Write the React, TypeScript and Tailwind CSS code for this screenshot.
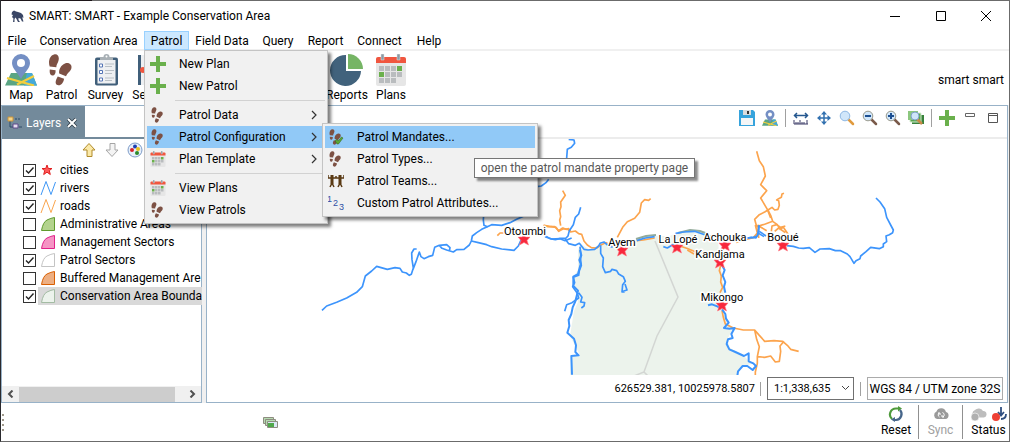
import type { ReactNode } from "react";

const menus = [
  { label: "File", width: "w-8" },
  { label: "Conservation Area", width: "w-[111px]" },
  { label: "Patrol", width: "w-[45px]" },
  { label: "Field Data", width: "w-[66px]" },
  { label: "Query", width: "w-[46px]" },
  { label: "Report", width: "w-[49px]" },
  { label: "Connect", width: "w-[59px]" },
  { label: "Help", width: "w-10" },
];

const layers = [
  { id: "cities", label: "cities", checked: true },
  { id: "rivers", label: "rivers", checked: true },
  { id: "roads", label: "roads", checked: true },
  { id: "admin", label: "Administrative Areas", checked: false, fill: "#b3d38d", stroke: "#5f9a2c" },
  { id: "mgmt", label: "Management Sectors", checked: false, fill: "#f594c4", stroke: "#e0218a" },
  { id: "patrol", label: "Patrol Sectors", checked: true, fill: "#ffffff", stroke: "#c4c4c4" },
  { id: "buffered", label: "Buffered Management Are", checked: false, fill: "#edaf83", stroke: "#d95f02" },
  { id: "boundary", label: "Conservation Area Bounda", checked: true, fill: "#ecf3ec", stroke: "#a3bba3" },
];

const cities = [
  { name: "Otoumbi", x: 524, y: 239, tx: 525, ty: 235 },
  { name: "Ayem", x: 622, y: 250, tx: 622, ty: 246 },
  { name: "La Lopé", x: 677, y: 247, tx: 678, ty: 243 },
  { name: "Achouka", x: 725, y: 245, tx: 725, ty: 241 },
  { name: "Booué", x: 783, y: 245, tx: 783, ty: 241 },
  { name: "Kandjama", x: 720, y: 262, tx: 720, ty: 258 },
  { name: "Mikongo", x: 722, y: 305, tx: 722, ty: 301 },
];

function Plus({ size = 16 }: { size?: number }) {
  return (
    <svg width={size} height={size} viewBox="0 0 16 16">
      <path d="M6 0h4v6h6v4h-6v6H6v-6H0V6h6z" fill="#6ab04c" />
    </svg>
  );
}

function Footprints({ size = 32, check = false }: { size?: number; check?: boolean }) {
  return (
    <svg width={size} height={size} viewBox="0 0 32 32">
      <g fill="#7d5144">
        <path d="M8 .5c3.500-1 5.500 2 4.600 5.700-.6 3-2.200 4-2.300 7L3.700 12.500C2 8 3.500 1.500 8 .5z" />
        <path d="M3.800 15.500l5.800.7c.2 3.300-1 5.500-3.200 5.300-2.400-.2-3-3-2.600-6z" />
        <path d="M19 9.500c4-1.500 7.700 1.500 6.200 5.500-1.200 3-4.200 4.200-5.200 7.300l-6.800-2.700c-.6-4 1.700-8.500 5.800-10.100z" />
        <path d="M11.800 22.500l6.300 2.300c-.8 4.500-3.500 7.300-6.500 6.300-3.200-1.100-2-5.200.2-8.600z" />
      </g>
      {check && <path d="M14 23l4-2 2 3 7-8 3 2-9 12h-3z" fill="#5aa836" stroke="#2e5f1b" />}
    </svg>
  );
}

function Calendar({ size = 32 }: { size?: number }) {
  return (
    <svg width={size} height={size} viewBox="0 0 32 32">
      <path d="M1 4h30v26a2 2 0 0 1-2 2H3a2 2 0 0 1-2-2z" fill="#e6e6e6" />
      <path d="M1 9V5q0-2 2-2h26q2 0 2 2v4z" fill="#f0563f" />
      <path d="M6 0h3v6H6zM22 0h3v6h-3z" fill="#8c9ba5" stroke="#e6e6e6" strokeWidth=".5" />
      <path
        d="M4 12h5v5H4zM10 12h5v5h-5zM16 12h5v5h-5zM10 18h5v5h-5zM16 18h5v5h-5zM22 18h5v5h-5zM4 24h5v5H4zM10 24h5v5h-5zM16 24h5v5h-5z"
        fill="#b9bcbe"
      />
      <path d="M22 12h5v5h-5zM4 18h5v5H4z" fill="#6ab04c" />
    </svg>
  );
}

function MapPin({ size = 32 }: { size?: number }) {
  return (
    <svg width={size} height={size} viewBox="0 0 32 32">
      <path d="M6 19h21l5 12.500H0z" fill="#5aa583" />
      <path d="M22 19h5l5 12.500H19z" fill="#46a9d8" />
      <path d="M2 24l27 7.500M12 30.500L29 22" stroke="#f5cf3d" strokeWidth="2.200" fill="none" />
      <path d="M16 25C12 18 7 14 7 9a9 9 0 0 1 18 0c0 5-5 9-9 16z" fill="#748fc4" />
      <circle cx="16" cy="9" r="4" fill="#fff" />
    </svg>
  );
}

function Clipboard() {
  return (
    <svg width="32" height="32" viewBox="0 0 32 32">
      <rect x="5" y="3.500" width="23" height="28" rx="2" fill="#405f7a" />
      <rect x="7.500" y="6" width="18" height="23.500" fill="#eef0f2" />
      <path d="M10 6V3h3.500a3 3 0 0 1 6 0H23v3z" fill="#a8b0b5" />
      <circle cx="16.500" cy="2.500" r="1" fill="#fff" />
      <path d="M9.500 10h3v3h-3zM9.500 16.500h3v3h-3zM9.500 24h3v3h-3z" fill="#fff" stroke="#5575b5" />
      <path d="M15 10h9M15 12.500h7M15 16.500h9M15 19.500h7M15 24h9M15 26.500h7" stroke="#b9c0c6" />
    </svg>
  );
}

function Notebook() {
  return (
    <svg width="32" height="32" viewBox="0 0 32 32">
      <path d="M0 1h28v30H0z" fill="#405f7a" />
      <path d="M3 1h25v30H3z" fill="#eef0f2" />
      <circle cx="5" cy="16" r="3" fill="#f0563f" />
    </svg>
  );
}

function Pie() {
  return (
    <svg width="34" height="32" viewBox="0 0 34 32">
      <path d="M16 1v16h15A15.500 15.500 0 1 1 16 1z" fill="#41627c" />
      <path d="M18 0a15 15 0 0 1 15 15H18z" fill="#76b565" />
    </svg>
  );
}

function Lens({ sign }: { sign?: "plus" | "minus" }) {
  return (
    <svg width="16" height="16" viewBox="0 0 16 16">
      <path d="M9 9l5 5" stroke={sign ? "#7a5a4a" : "#e09a3e"} strokeWidth="2.500" strokeLinecap="round" />
      <circle cx="6" cy="6" r="4.800" fill="#d0e6fa" stroke={sign ? "#9a9a8c" : "#8fb8e4"} />
      {sign && <path d="M3 6h6" stroke="#1d4f91" strokeWidth="2" />}
      {sign === "plus" && <path d="M6 3v6" stroke="#1d4f91" strokeWidth="2" />}
    </svg>
  );
}

function LayerIcon({ id, fill, stroke }: { id: string; fill?: string; stroke?: string }) {
  return (
    <svg width="16" height="16" viewBox="0 0 16 16" className="shrink-0">
      {id === "cities" && (
        <path d="M7 3l1.300 3.500H12L9.300 8.600 10.300 12.500 7 10.200 3.700 12.500l1-3.900L2 6.500h3.700z" fill="#ff5a5a" stroke="#e02020" />
      )}
      {(id === "rivers" || id === "roads") && (
        <path d="M1 15L6 1.500l5 13L15.500 2" fill="none" stroke={id === "rivers" ? "#3d96f5" : "#f9a54e"} />
      )}
      {fill && <path d="M1.500 14.500Q3 6 7 4t7.500-2.500v13z" fill={fill} stroke={stroke} />}
    </svg>
  );
}

function MenuRow({ icon, label, active, arrow, children }: {
  icon: ReactNode;
  label: string;
  active?: boolean;
  arrow?: boolean;
  children?: ReactNode;
}) {
  return (
    <li className="relative">
      <button
        className={
          active
            ? "flex h-[22px] w-full items-center bg-[#91c9f7] pl-[3px] pr-2 text-left"
            : "flex h-[22px] w-full items-center pl-[3px] pr-2 text-left"
        }
      >
        <span className="w-[29px] shrink-0">{icon}</span>
        <span className="flex-1">{label}</span>
        {arrow && (
          <svg width="6" height="10" viewBox="0 0 6 10">
            <path d="M1 1l4 4-4 4" fill="none" stroke="#333" strokeWidth="1.200" />
          </svg>
        )}
      </button>
      {children}
    </li>
  );
}

function MenuLine() {
  return (
    <li className="flex h-[7px] items-center pl-[28px]">
      <div className="h-px w-full bg-[#d2d2d2]" />
    </li>
  );
}

function PatrolMenu() {
  return (
    <div className="absolute left-0 top-[19px] z-20 w-[184px] border border-[#c4c4c4] bg-[#f1f1f1] p-[2px] shadow-[3px_3px_3px_rgba(0,0,0,0.5)]">
      <ul>
        <MenuRow icon={<Plus />} label="New Plan" />
        <MenuRow icon={<Plus />} label="New Patrol" />
        <MenuLine />
        <MenuRow icon={<Footprints size={16} />} label="Patrol Data" arrow />
        <MenuRow icon={<Footprints size={16} />} label="Patrol Configuration" active arrow>
          <ul className="absolute -top-[3px] left-[175px] w-[216px] border border-[#c4c4c4] bg-[#f1f1f1] p-[2px] shadow-[3px_3px_3px_rgba(0,0,0,0.5)]">
            <MenuRow icon={<Footprints size={16} check />} label="Patrol Mandates..." active />
            <MenuRow icon={<Footprints size={16} />} label="Patrol Types..." />
            <MenuRow
              icon={
                <svg width="16" height="16" viewBox="0 0 16 16" fill="none" stroke="#5a3a14" strokeWidth="1.500">
                  <path d="M0 5h16M0 2v3M8 3v2M16 2v3M4 5v5l-2 4M4 10l2 4M12 5v5l-2 4M12 10l2 4" />
                  <path d="M4 2v9M12 2v9" strokeWidth="3" />
                </svg>
              }
              label="Patrol Teams..."
            />
            <MenuRow
              icon={
                <svg width="16" height="16" viewBox="0 0 16 16" fill="#2f4fa5" fontSize="9" fontFamily="Liberation Sans, sans-serif">
                  <text x="-1" y="7">1</text>
                  <text x="5" y="11">2</text>
                  <text x="11" y="15">3</text>
                </svg>
              }
              label="Custom Patrol Attributes..."
            />
          </ul>
        </MenuRow>
        <MenuRow icon={<Calendar size={16} />} label="Plan Template" arrow />
        <MenuLine />
        <MenuRow icon={<Calendar size={16} />} label="View Plans" />
        <MenuRow icon={<Footprints size={16} />} label="View Patrols" />
      </ul>
      <div
        role="tooltip"
        className="absolute left-[329px] top-[107px] flex h-5 w-[221px] items-center justify-center whitespace-nowrap border border-[#767676] bg-white text-[#575757] shadow-[3px_3px_2px_rgba(0,0,0,0.45)]"
      >
        open the patrol mandate property page
      </div>
    </div>
  );
}

function Tool({ icon, label, width }: { icon: ReactNode; label: string; width: string }) {
  return (
    <button className={`flex flex-col items-center gap-px ${width}`}>
      {icon}
      <span className="h-4 leading-4">{label}</span>
    </button>
  );
}

function LayerPanel() {
  return (
    <section className="flex w-[201px] shrink-0 flex-col border border-[#98b2c8] bg-white">
      <div className="flex h-[33px] items-start border-b-2 border-[#738a9b]">
        <div className="flex h-[33px] w-[83px] items-center bg-[#738a9b] pl-[5px] text-white">
          <svg width="16" height="16" viewBox="0 0 16 16" className="mr-[3px] shrink-0">
            <path d="M3 6v6h4M8 4h2M11 4h2M12 12h3" stroke="#2c4a66" fill="none" />
            <path d="M1 2h5v4H1z" fill="#f5d48a" stroke="#c8933a" />
            <path d="M6 9h5v4H6z" fill="#e4dcef" stroke="#5e4a8a" />
          </svg>
          <span className="flex-1">Layers</span>
          <button aria-label="Close Layers" className="mr-2">
            <svg width="10" height="10" viewBox="0 0 10 10">
              <path d="M1 1l8 8M9 1L1 9" stroke="#2d3a44" strokeWidth="3.500" />
              <path d="M1 1l8 8M9 1L1 9" stroke="#fff" strokeWidth="2" />
            </svg>
          </button>
        </div>
      </div>
      <div className="flex h-[22px] items-center gap-[7px] pl-[79px]">
        <button aria-label="Move up">
          <svg width="16" height="16" viewBox="0 0 16 16">
            <path d="M8 1.500L14 8h-3v6.500H6V8H2z" fill="#fbe9a8" stroke="#b08a2a" />
          </svg>
        </button>
        <button aria-label="Move down">
          <svg width="16" height="16" viewBox="0 0 16 16">
            <path d="M8 14.500L14 8h-3V1.500H6V8H2z" fill="#f4f4f4" stroke="#a5a5a5" />
          </svg>
        </button>
        <button aria-label="Style">
          <svg width="16" height="16" viewBox="0 0 16 16">
            <circle cx="8" cy="8" r="7" fill="#e6effa" stroke="#7e9cc8" />
            <circle cx="5" cy="8" r="2" fill="#d8232a" />
            <circle cx="8" cy="4.500" r="2" fill="#1c3fb4" />
            <circle cx="11" cy="7" r="2" fill="#e8c21a" />
            <circle cx="10" cy="11" r="2" fill="#2b8a2b" />
          </svg>
        </button>
      </div>
      <ul className="flex-1 pr-px">
        {layers.map((layer) => (
          <li key={layer.id} className="flex h-[18px] items-center pl-[21px]">
            <span className="relative mr-[2px] size-[13px] shrink-0">
              <input
                id={layer.id}
                type="checkbox"
                defaultChecked={layer.checked}
                className="peer block size-[13px] appearance-none border border-[#333] bg-white"
              />
              <svg
                viewBox="0 0 13 13"
                className="pointer-events-none absolute inset-0 hidden size-[13px] peer-checked:block"
              >
                <path d="M3 6.500L5.500 9 10.500 3.500" fill="none" stroke="#222" strokeWidth="1.400" />
              </svg>
            </span>
            <label
              htmlFor={layer.id}
              className={
                layer.id === "boundary"
                  ? "flex h-[18px] flex-1 items-center gap-1 whitespace-nowrap bg-[#d9d9d9] pl-[2px]"
                  : "flex h-[18px] flex-1 items-center gap-1 whitespace-nowrap pl-[2px]"
              }
            >
              <LayerIcon id={layer.id} fill={layer.fill} stroke={layer.stroke} />
              {layer.label}
            </label>
          </li>
        ))}
      </ul>
      <div className="flex h-4 items-center bg-[#f0f0f0]">
        <button aria-label="Scroll left" className="flex w-[17px] justify-center">
          <svg width="7" height="8" viewBox="0 0 7 8">
            <path d="M5.500 0.500L2 4l3.500 3.500" fill="none" stroke="#505050" strokeWidth="2" />
          </svg>
        </button>
        <div className="h-[15px] w-[156px] bg-[#cdcdcd]" />
        <div className="flex-1" />
        <button aria-label="Scroll right" className="flex w-[17px] justify-center">
          <svg width="7" height="8" viewBox="0 0 7 8">
            <path d="M1.500 0.500L5 4 1.500 7.500" fill="none" stroke="#505050" strokeWidth="2" />
          </svg>
        </button>
      </div>
    </section>
  );
}

function MapView() {
  return (
    <svg viewBox="207 139 800 236" preserveAspectRatio="xMidYMid slice" className="h-full w-full">
      <path
        d="M578 250L581 244L590 250L600 244L612 246L622 243L640 239L656 236L670 236L678 232L695 230L706 233L718 240L720 262L724 290L722 308L727 322L733 328L727 340L730 348L742 354L752 364L742 366L737 376H570L571 356L580 355L570 336L574 311L578 302L573 278L578 270Z"
        fill="#ecf3ec"
      />
      <path d="M655 241L678 297L657 336L644 372L634 376M644 372L648 376" fill="none" stroke="#d3d6d3" strokeWidth="1.500" />
      <path d="M636 239l10-3 10-1M678 233l12-3 10 1 8 3" fill="none" stroke="#93ab9a" strokeWidth="2" />

      {/* roads */}
      <g fill="none" stroke="#fca44d" strokeLinejoin="round" strokeWidth="5">
        <g transform="translate(310 210) scale(.33333)">
          <path d="M562 77l8-8 10 0 3-4" transform="translate(0 0)" />
          <path d="M700 46l14 4 20 0 12 12 12-8 10 4 8-2 6 8" />
        </g>
        <g transform="translate(530 180) scale(.33333)">
          <path d="M98 32l8 14-14 20 1 14-4 12 3 18-3 10 3 17M42 136l16 3 20 3 8 12 14-8 14 2 8 8 14-3 10 8 9 2 7 20 10 12 12 8 16 1 14-10 14-6 18 8 12 2" />
          <path d="M262 172l16-30 14-17 22-10 15-18 5-28 10-10 12 2 6-5M320 182l20-2 34-6" />
        </g>
        <g transform="translate(560 130) scale(.33333)">
          <path d="M590 64l8 28 12 18 6 28-14 26 18 18-18 22 20 34 10 26" />
          <path d="M586 285l6 24-12 14-26 6-26 8M350 345l30 10 30 12 20-2M594 284l2 40" />
        </g>
        <g transform="translate(740 130) scale(.33333)">
          <path d="M84 240l12-8 8 8 10-2 4-12-2-14-6-2 6-4 8-4 2-10 6-2M84 240l8 16 6 18 14 10 8 14 10-6 14 20M84 240l-10 6-16 8-14 14 6 22 26-8 22-8M94 304l2-16 14-4 12 8 14-4M104 304l12-10 20 14M60 290l20 12" />
        </g>
        <g transform="translate(560 250) scale(.33333)">
          <path d="M482 46l-4 16 6 16-2 18 6 16-8 16M486 182l4 20 6 20 24 12 30 6 34 0 12 14 18 20 28-2 26 2 14 12 10 12 24 6M584 240l6 28 8 22-6 30 0 20-6 26 0 10M594 320l20 2 18-4 14 18 12-2 4-30-2-16 12-14" />
          <path d="M382 0l20 12" />
        </g>
      </g>

      {/* rivers */}
      <g fill="none" stroke="#3c94fc" strokeLinejoin="round" strokeWidth="5">
        <g transform="translate(310 210) scale(.33333)">
          <path d="M36 301l14-13 30-11 30-13 30-17 17-17 9-32 19-15 15-14 32 9 23-5 15 2 7 11 12 3 9 7 6-3 6-19-4-25-1-20 7-12 8 0M309 178l9-23 10-29 5 14 9 6 13-6 13-4 6-24 14-6 22-2 10 9-2 12M388 106l8 9 14 5 20 6 10-7 22-1 16-13 6-12 3-15 13-10 15-10 17-8" />
          <path d="M522 0l-2 30 2 16 10 4 13-6 30 2 25-8 20-10 22-10M484 93l21 5 25 6 15 6 30 7 37 4 13-13 10-22M705 80l20 7 25-1 15 6 20-8" />
        </g>
        <g transform="translate(530 180) scale(.33333)">
          <path d="M20 20l14-2 14-10 8-10M44 166l16 10 16 3 16-4 12 0 12 16 20 5 12-6 14 18 12 2 20-2 12-10 4-8 12-4 14 12 12 4M152 82l-6 20-10 10-6 22-12 18-4 16-10 10M320 182l26-8 28-4" />
          <path d="M150 200l2 20 0 20 2 16-6 16-2 14-16 6 4 16-6 12 14 20 4 14-20 14-16 6-6 20M146 338l10 14-4 14 12 2-2 10-8 6M212 196l0 24 8 14-2 26 8 18 16-4 4-6 14 4 6 10 14 8 6 14-8 10-2 22 8 0M285 312l6 18-12 4" />
        </g>
        <g transform="translate(560 130) scale(.33333)">
          <path d="M26 28l16 2 2 10-10 12-12 6-2 26M310 350l12 4 20-12 6-32 22-4 34-2 30 10 30 8M556 326l18-4 14 2 8-16 0-22M596 310l16 10" />
        </g>
        <g transform="translate(740 130) scale(.33333)">
          <path d="M22 324l18-2 12-4 6-32M58 304l20 14" />
          <path d="M140 347L160 349 176 354 190 355 208 353 225 367 240 357 268 356 286 362 302 362 322 372 330 380 342 400 348 392 360 386 362 378 378 365 392 352 418 356 430 350 430 342 440 335 438 318 448 314 458 308 460 300 452 285 440 262 434 236 420 216 408 204" />
        </g>
        <g transform="translate(560 250) scale(.33333)" strokeWidth="6">
          <path d="M60 0l4 16-6 14 4 12-8 30-14 8 0 28 14 14-4 16-4 16-8 18-4 20-8 18 2 18-6 20 20 18 6 20-2 20 10 10-22 2 2 56" />
          <path d="M486 46l8 14-6 16 8 20-4 14 4 18M444 166l12-3 16 6 10 8M486 178l10 14 2 14 8 12-14 16 16 2 16-2-10 18 4 12-14 4-4 14 8 16 18 8 26 12 14-8 0 24 14 6 8 8-10 12-16-12-14 0-14 16-2 14" />
        </g>
      </g>

      {cities.map((c) => (
        <path
          key={c.name}
          transform={`translate(${c.x} ${c.y})`}
          d="M0-6l1.700 4H6L3 1.500 4.500 6 0 3.500-4.500 6-3 1.500-6-2h4.300z"
          fill="#f8283c"
          stroke="#ff7b85"
          strokeWidth=".6"
        />
      ))}
      {cities.map((c) => (
        <text
          key={c.name}
          x={c.tx}
          y={c.ty}
          textAnchor="middle"
          fontSize="11"
          stroke="#fff"
          strokeWidth="3"
          strokeLinejoin="round"
          paintOrder="stroke"
        >
          {c.name}
        </text>
      ))}
    </svg>
  );
}

function MapPanel() {
  return (
    <section className="flex min-w-0 flex-1 flex-col border border-[#98b2c8] bg-white">
      <div className="flex h-[33px] items-center justify-end gap-[7px] border-b-2 border-[#ececec] pb-[7px] pr-[6px]">
        <button aria-label="Save">
          <svg width="16" height="16" viewBox="0 0 16 16">
            <path d="M0 0h14l2 2v14H0z" fill="#36a3dc" />
            <path d="M4 0h8v5H4z" fill="#d9dcde" />
            <path d="M8 1h2v3H8z" fill="#333" />
            <path d="M2 8h12v7H2z" fill="#f4f6f7" />
          </svg>
        </button>
        <button aria-label="Map">
          <MapPin size={16} />
        </button>
        <span className="h-[18px] w-px bg-[#a0a0a0]" />
        <button aria-label="Measure">
          <svg width="16" height="16" viewBox="0 0 16 16">
            <path d="M1 5.500h14M4 3L1.500 5.500 4 8M12 3l2.500 2.500L12 8" fill="none" stroke="#24578f" strokeWidth="1.500" />
            <path d="M1 10v4M3 12v2M5 12v2M7 10v4M9 12v2M11 12v2M14 10v4M1 14h14" stroke="#3a3a66" />
          </svg>
        </button>
        <button aria-label="Pan">
          <svg width="16" height="16" viewBox="0 0 16 16">
            <path d="M8 2v12M2 8h12" stroke="#3271b0" strokeWidth="1.500" />
            <path d="M8 1l3 3.500H5zM8 15l3-3.500H5zM1 8l3.500-3v6zM15 8l-3.500-3v6z" fill="#3271b0" />
          </svg>
        </button>
        <button aria-label="Zoom">
          <Lens />
        </button>
        <button aria-label="Zoom out">
          <Lens sign="minus" />
        </button>
        <button aria-label="Zoom in">
          <Lens sign="plus" />
        </button>
        <button aria-label="Zoom to layer">
          <svg width="16" height="16" viewBox="0 0 16 16">
            <path d="M4 5h12v9H4z" fill="#37823a" />
            <path d="M2 3h11v9H2z" fill="#5aa84e" stroke="#d8edd4" />
            <path d="M0 1h10v9H0z" fill="#8cc77e" />
            <path d="M9 9l5 5" stroke="#c98a4a" strokeWidth="2.500" />
            <circle cx="7" cy="6" r="4" fill="#cfe4fa" stroke="#7da0c8" />
          </svg>
        </button>
        <span className="h-[18px] w-px bg-[#a0a0a0]" />
        <button aria-label="Add">
          <Plus />
        </button>
        <button aria-label="Minimize view">
          <svg width="16" height="16" viewBox="0 0 16 16">
            <path d="M3.500 3.500h9v3h-9z" fill="#fff" stroke="#666" />
          </svg>
        </button>
        <button aria-label="Maximize view">
          <svg width="16" height="16" viewBox="0 0 16 16">
            <path d="M3.500 3.500h9v9h-9zM3.500 5.500h9" fill="#fff" stroke="#555" />
          </svg>
        </button>
      </div>
      <div className="min-h-0 flex-1 overflow-hidden">
        <div className="h-[236px] min-h-full w-full">
          <MapView />
        </div>
      </div>
      <div className="flex h-[27px] shrink-0 items-center justify-end whitespace-nowrap pr-1">
        <span className="pr-[5px] text-[11px]">626529.381, 10025978.5807</span>
        <span className="mr-[6px] h-[14px] w-px bg-[#a0a0a0]" />
        <div className="relative">
          <select
            aria-label="Scale"
            className="block h-[23px] w-[87px] appearance-none border border-[#707070] bg-white pl-[6px] text-[11px]"
          >
            <option>1:1,338,635</option>
          </select>
          <svg width="9" height="6" viewBox="0 0 9 6" className="pointer-events-none absolute right-1 top-2">
            <path d="M1 1l3.500 3.500L8 1" fill="none" stroke="#444" />
          </svg>
        </div>
        <span className="mx-[6px] h-[14px] w-px bg-[#a0a0a0]" />
        <button className="h-[23px] w-[136px] border border-[#ababab] bg-[#fdfdfd]">WGS 84 / UTM zone 32S</button>
      </div>
    </section>
  );
}

export default function App() {
  return (
    <div className="flex min-h-screen flex-col border-b border-l border-r border-b-[#6b6b6b] border-l-[#2a2a2e] border-r-[#6b6b6b] bg-white font-[Roboto,sans-serif] text-[12px] leading-4 text-black">
      <div className="flex h-px">
        <div className="w-[91px] bg-[#1c1518]" />
        <div className="flex-1 bg-[#6b6b6b]" />
      </div>

      <header className="flex h-[30px] items-center pl-[10px]">
        <svg width="13" height="13" viewBox="0 0 13 13" className="mr-[5px]">
          <path
            d="M1 2l2-1.500 2 1 2 .5 3 1 2 2 .5 3-1-1 0 1.500 1 3h-1.500l-1.500-3-2-.5 0 2 1.500 2H7l-1.500-3L4.500 7.500 3.500 9v3H2l.5-3.500L1 7l1-2-1.500-.5z"
            fill="#3a4665"
          />
        </svg>
        <h1 className="flex-1">SMART: SMART - Example Conservation Area</h1>
        <button aria-label="Minimize" className="flex w-[46px] justify-center">
          <svg width="10" height="10" viewBox="0 0 10 10">
            <path d="M0 5.500h10" stroke="#000" />
          </svg>
        </button>
        <button aria-label="Maximize" className="flex w-[45px] justify-center">
          <svg width="10" height="10" viewBox="0 0 10 10">
            <path d="M.5.500h9v9h-9z" fill="none" stroke="#000" />
          </svg>
        </button>
        <button aria-label="Close" className="flex w-[46px] justify-center">
          <svg width="10" height="10" viewBox="0 0 10 10">
            <path d="M0 0l10 10M10 0L0 10" stroke="#000" />
          </svg>
        </button>
      </header>

      <nav className="flex h-5 items-start border-b-2 border-[#f0f0f0]">
        {menus.map((menu) => (
          <div key={menu.label} className={`relative ${menu.width}`}>
            <button
              className={
                menu.label === "Patrol"
                  ? "flex h-[19px] w-full items-center justify-center whitespace-nowrap border border-[#99d1ff] bg-[#cce8ff]"
                  : "flex h-[19px] w-full items-center justify-center whitespace-nowrap"
              }
            >
              {menu.label}
            </button>
            {menu.label === "Patrol" && <PatrolMenu />}
          </div>
        ))}
      </nav>

      <div className="flex h-[54px] items-start pl-[1px] pt-[3px]">
        <Tool icon={<MapPin />} label="Map" width="w-[38px]" />
        <Tool icon={<Footprints />} label="Patrol" width="w-[43px]" />
        <Tool icon={<Clipboard />} label="Survey" width="w-[45px]" />
        <Tool icon={<Notebook />} label="Sensors" width="w-[52px]" />
        <div className="w-[145px]" />
        <Tool icon={<Pie />} label="Reports" width="w-[44px]" />
        <Tool icon={<Calendar />} label="Plans" width="w-[44px]" />
        <span className="ml-auto self-center pr-[5px]">smart smart</span>
      </div>

      <main className="flex flex-1 gap-1 bg-[#f0f0f0] pr-px">
        <LayerPanel />
        <MapPanel />
      </main>

      <footer className="flex h-[38px] items-center">
        <div className="flex flex-col gap-[3px] pl-[1px]">
          <span className="size-[2px] bg-[#a09a8c]" />
          <span className="size-[2px] bg-[#a09a8c]" />
          <span className="size-[2px] bg-[#a09a8c]" />
          <span className="size-[2px] bg-[#a09a8c]" />
        </div>
        <button aria-label="Windows" className="ml-[259px]">
          <svg width="16" height="13" viewBox="0 0 16 13">
            <path d="M.5 1.500h10v6H.5z" fill="#b6dbb0" stroke="#8d8d80" />
            <path d="M2.500 3.500h10v6h-10z" fill="#b6dbb0" stroke="#8d8d80" />
            <path d="M4.500 5.500h10v6h-10z" fill="#dbe8f5" stroke="#8d8d80" />
            <path d="M5 7h6v4H5z" fill="#4fa84b" />
          </svg>
        </button>
        <div className="ml-auto flex items-center">
          <button className="flex w-[44px] flex-col items-center">
            <svg width="16" height="16" viewBox="0 0 16 16" fill="none" strokeWidth="2.200">
              <path d="M4 13A6 6 0 0 1 8 2.500h3" stroke="#4e9a3c" />
              <path d="M10 0l4 2.500-4 3z" fill="#4e9a3c" stroke="none" />
              <path d="M12 4A6 6 0 0 1 8 14H6" stroke="#47668a" />
              <path d="M7 11v5l-4-2.500z" fill="#47668a" stroke="none" />
            </svg>
            <span>Reset</span>
          </button>
          <span className="h-[34px] w-px bg-[#909090]" />
          <button disabled className="flex w-[43px] flex-col items-center text-[#a0a0a0]">
            <svg width="16" height="16" viewBox="0 0 16 16">
              <path d="M4 13a4 4 0 0 1-.5-7.500A5 5 0 0 1 13 6a3.600 3.600 0 0 1-.5 7z" fill="#9a9a9a" />
              <path d="M6.500 11A2.500 2.500 0 0 1 6 7M9.500 6.500A2.500 2.500 0 0 1 10 11M5 7h2v2M11 11H9V9" fill="none" stroke="#fff" />
            </svg>
            <span>Sync</span>
          </button>
          <span className="h-[34px] w-px bg-[#909090]" />
          <button className="flex w-[46px] flex-col items-center pl-[5px]">
            <svg width="38" height="16" viewBox="0 0 38 16">
              <path d="M4 11a4 4 0 0 1 1-7A5 5 0 0 1 13 5a3.300 3.300 0 0 1 1 6.500H9z" fill="#bdbdbd" />
              <circle cx="5" cy="11" r="4" fill="#b0b0b0" stroke="#fff" strokeWidth=".6" />
              <path d="M31 1v8M28 6l3 3.500L34 6M36 8q0 5-5 5" fill="none" stroke="#2f4f80" strokeWidth="1.800" />
              <circle cx="26" cy="11" r="4" fill="#ee4035" />
            </svg>
            <span>Status</span>
          </button>
        </div>
      </footer>
    </div>
  );
}
